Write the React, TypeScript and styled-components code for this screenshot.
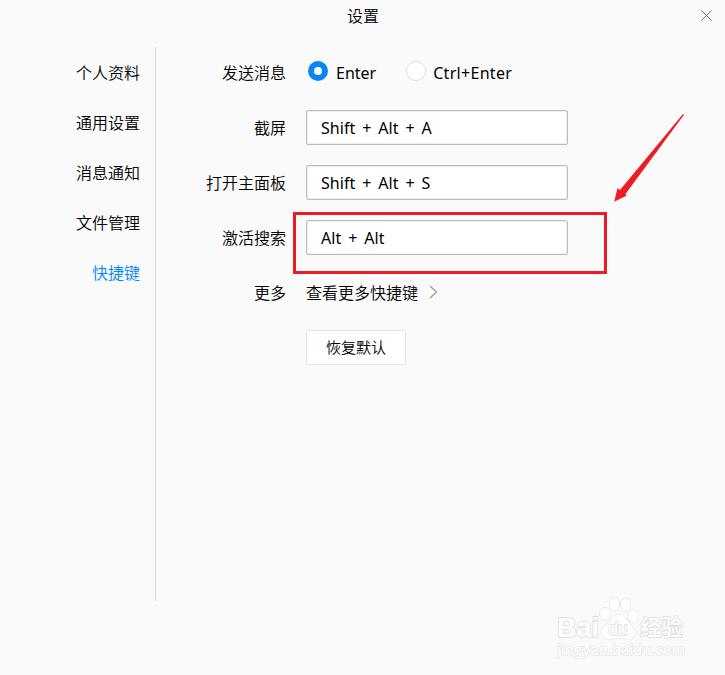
import React from 'react';
import styled, { createGlobalStyle } from 'styled-components';

const GlobalStyle = createGlobalStyle`
  * { box-sizing: border-box; }
  body {
    margin: 0;
    background: #fafafa;
    color: #000;
    font: 16px/20px "Noto Sans", "Noto Sans CJK SC", sans-serif;
    overflow: hidden;
  }
`;

const Window = styled.div`
  position: relative;
  display: flex;
  flex-direction: column;
  width: 725px;
  height: 675px;
  background: #fafafa;
`;

const TitleBar = styled.header`
  display: grid;
  grid-template-columns: 40px 1fr 40px;
  align-items: center;
  height: 32px;
  margin-bottom: 15px;
`;

const Title = styled.h1`
  grid-column: 2;
  margin: 0;
  padding: 0 0 2px 1px;
  font-family: "Noto Sans CJK SC", sans-serif;
  font-size: 16px;
  font-weight: 350;
  text-align: center;
`;

const CloseButton = styled.button`
  grid-column: 3;
  display: flex;
  justify-content: center;
  width: 40px;
  padding: 0 0 2px 2px;
  border: 0;
  background: none;
`;

const Body = styled.div`
  display: flex;
  height: 554px;
`;

const Sidebar = styled.nav`
  display: flex;
  flex-direction: column;
  width: 156px;
  padding-right: 15px;
  border-right: 1px solid #dcdcdc;
`;

const NavItem = styled.a<{ $active?: boolean }>`
  display: flex;
  align-items: center;
  justify-content: flex-end;
  height: 50px;
  color: ${(p) => (p.$active ? '#0087ff' : '#000')};
  font-family: "Noto Sans CJK SC", sans-serif;
  font-weight: 350;
`;

const Form = styled.main`
  flex: 1;
  margin-top: -2px;
  padding-left: 24px;
`;

const Row = styled.div`
  display: grid;
  grid-template-columns: 106px 1fr;
  column-gap: 20px;
  align-items: center;
  height: 55px;
`;

const Label = styled.span`
  padding-bottom: 1px;
  font-family: "Noto Sans CJK SC", sans-serif;
  font-weight: 350;
  text-align: right;
`;

const RadioGroup = styled.div`
  display: flex;
  gap: 30px;
  padding-left: 2px;
`;

const Radio = styled.label<{ $tracking: string; $gap: string }>`
  display: flex;
  align-items: center;
  gap: ${(p) => p.$gap};
  height: 20px;
  letter-spacing: ${(p) => p.$tracking};
`;

const RadioMark = styled.span<{ $checked?: boolean }>`
  width: 20px;
  height: 20px;
  margin-top: -4px;
  border: ${(p) => (p.$checked ? '6px solid #0787f5' : '1px solid #dedede')};
  border-radius: 50%;
  background: #fff;
`;

const KeyField = styled.div`
  display: flex;
  align-items: center;
  width: 262px;
  height: 35px;
  padding-left: 14px;
  border: 1px solid #bcbcbc;
  border-radius: 2px;
  background: #fff;
  box-shadow: inset 0 0 0 1px #eee;
  letter-spacing: 0.04px;
  word-spacing: 2.7px;
`;

const MoreLink = styled.a`
  display: flex;
  align-items: center;
  gap: 11px;
  padding-bottom: 1px;
  font-family: "Noto Sans CJK SC", sans-serif;
  font-weight: 350;
`;

const ResetButton = styled.button`
  grid-column: 2;
  width: 100px;
  height: 35px;
  margin-top: -1px;
  padding: 0;
  border: 1px solid #e2e2e2;
  border-radius: 2px;
  background: #fff;
  color: #000;
  font: 350 15px/20px "Noto Sans CJK SC", sans-serif;
`;

const Highlight = styled.div`
  position: absolute;
  left: 293px;
  top: 212px;
  width: 314px;
  height: 62px;
  border: 3px solid #ed1c24;
`;

const Arrow = styled.svg`
  position: absolute;
  left: 610px;
  top: 110px;
`;

const Watermark = styled.svg`
  position: absolute;
  left: 545px;
  top: 590px;
  font-family: "Liberation Sans", "Noto Sans CJK SC", sans-serif;
`;

const sections = ['个人资料', '通用设置', '消息通知', '文件管理', '快捷键'];
const shortcuts = [
  { label: '截屏', keys: 'Shift + Alt + A' },
  { label: '打开主面板', keys: 'Shift + Alt + S' },
  { label: '激活搜索', keys: 'Alt + Alt' },
];

export default function App() {
  return (
    <>
      <GlobalStyle />
      <Window>
        <TitleBar>
          <Title>设置</Title>
          <CloseButton aria-label="关闭">
            <svg width="11" height="11" viewBox="0 0 11 11">
              <path d="M.5.5l10 10M10.5.5l-10 10" stroke="#68707c" strokeWidth="1" />
            </svg>
          </CloseButton>
        </TitleBar>
        <Body>
          <Sidebar>
            {sections.map((name) => (
              <NavItem key={name} $active={name === '快捷键'}>{name}</NavItem>
            ))}
          </Sidebar>
          <Form>
            <Row>
              <Label>发送消息</Label>
              <RadioGroup>
                <Radio $tracking="0" $gap="8px"><RadioMark $checked />Enter</Radio>
                <Radio $tracking="0.3px" $gap="7px"><RadioMark />Ctrl+Enter</Radio>
              </RadioGroup>
            </Row>
            {shortcuts.map(({ label, keys }) => (
              <Row key={label}>
                <Label>{label}</Label>
                <KeyField>{keys}</KeyField>
              </Row>
            ))}
            <Row>
              <Label>更多</Label>
              <MoreLink>
                查看更多快捷键
                <svg width="9" height="14" viewBox="0 0 9 14" fill="none">
                  <path d="M1 1l6.5 6L1 13" stroke="#999" strokeWidth="1.2" />
                </svg>
              </MoreLink>
            </Row>
            <Row><ResetButton>恢复默认</ResetButton></Row>
          </Form>
        </Body>
        <Highlight />
        <Arrow width="80" height="100" viewBox="0 0 80 100">
          <path d="M73 4L74 4.7 15.5 84 16.7 85.5 4.2 91.8 7.5 78 10 80z" fill="#ed1c24" />
        </Arrow>
        <Watermark width="150" height="75" viewBox="0 0 150 75">
          <g fill="#fff" stroke="#dfdfdf" strokeWidth="1.2" paintOrder="stroke" strokeLinejoin="round">
            <ellipse cx="60" cy="24" rx="5" ry="6.3" />
            <ellipse cx="69.3" cy="13.8" rx="5" ry="6.5" />
            <ellipse cx="80.7" cy="14.8" rx="5" ry="6.5" />
            <ellipse cx="88.3" cy="26.3" rx="5" ry="6.3" />
            <path d="M74 24.500c-4 0-6 3-8 6-2 3-9 6-9 12 0 4 3 6.500 7 6.500 4 0 6-1 10-1s6 1 9.500 1c4 0 6.500-3 6.500-6.500 0-5-5-8-8-12-2-3-4-6-8-6z" />
            <g strokeWidth="1.8" fontWeight="700">
              <text x="12" y="47" fontSize="28" textLength="42" lengthAdjust="spacingAndGlyphs">Bai</text>
              <text x="63.500" y="44.500" fontSize="18" fontWeight="400" textLength="19" lengthAdjust="spacingAndGlyphs">du</text>
              <text x="95" y="45" fontSize="22" fontWeight="500" textLength="43" lengthAdjust="spacingAndGlyphs">经验</text>
            </g>
            <text x="12" y="65" fontFamily="DejaVu Sans" fontSize="13.500" textLength="128" strokeWidth="1.4" stroke="#e6e6e6" lengthAdjust="spacingAndGlyphs">jingyan.baidu.com</text>
          </g>
        </Watermark>
      </Window>
    </>
  );
}
